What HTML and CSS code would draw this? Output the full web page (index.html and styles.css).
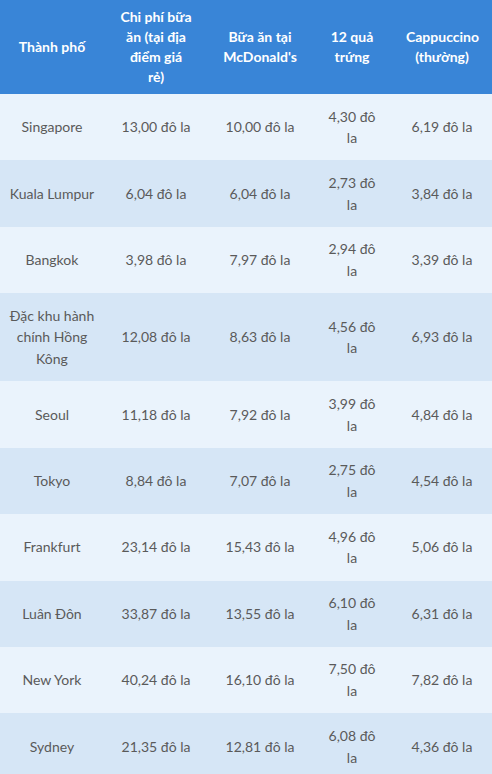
FILE: index.html
```html
<!DOCTYPE html>
<html>
<head>
    <meta charset="utf-8">
    <title>Chi phí sinh hoạt</title>
    <link rel="stylesheet" href="styles.css">
</head>
<body>
    <table class="price-table">
        <colgroup>
            <col class="col-city">
            <col class="col-meal">
            <col class="col-mcd">
            <col class="col-eggs">
            <col class="col-coffee">
        </colgroup>
        <thead>
            <tr>
                <th>Thành phố</th>
                <th>Chi phí bữa ăn (tại địa điểm giá<br>rẻ)</th>
                <th>Bữa ăn tại McDonald's</th>
                <th>12 quả trứng</th>
                <th>Cappuccino (thường)</th>
            </tr>
        </thead>
        <tbody>
            <tr><td>Singapore</td><td>13,00 đô la</td><td>10,00 đô la</td><td>4,30 đô la</td><td>6,19 đô la</td></tr>
            <tr><td>Kuala Lumpur</td><td>6,04 đô la</td><td>6,04 đô la</td><td>2,73 đô la</td><td>3,84 đô la</td></tr>
            <tr><td>Bangkok</td><td>3,98 đô la</td><td>7,97 đô la</td><td>2,94 đô la</td><td>3,39 đô la</td></tr>
            <tr><td>Đặc khu hành chính Hồng Kông</td><td>12,08 đô la</td><td>8,63 đô la</td><td>4,56 đô la</td><td>6,93 đô la</td></tr>
            <tr><td>Seoul</td><td>11,18 đô la</td><td>7,92 đô la</td><td>3,99 đô la</td><td>4,84 đô la</td></tr>
            <tr><td>Tokyo</td><td>8,84 đô la</td><td>7,07 đô la</td><td>2,75 đô la</td><td>4,54 đô la</td></tr>
            <tr><td>Frankfurt</td><td>23,14 đô la</td><td>15,43 đô la</td><td>4,96 đô la</td><td>5,06 đô la</td></tr>
            <tr><td>Luân Đôn</td><td>33,87 đô la</td><td>13,55 đô la</td><td>6,10 đô la</td><td>6,31 đô la</td></tr>
            <tr><td>New York</td><td>40,24 đô la</td><td>16,10 đô la</td><td>7,50 đô la</td><td>7,82 đô la</td></tr>
            <tr><td>Sydney</td><td>21,35 đô la</td><td>12,81 đô la</td><td>6,08 đô la</td><td>4,36 đô la</td></tr>
        </tbody>
    </table>
</body>
</html>
```
FILE: styles.css
```css
body {
    font-family: 'Lato', 'Noto Sans', sans-serif;
    margin: 0;
    background-color: #fff;
}
.price-table {
    width: 100%;
    table-layout: fixed;
    border-collapse: collapse;
    font-size: 14px;
}
.col-city { width: 104px; }
.col-meal { width: 104px; }
.col-mcd { width: 104px; }
.col-eggs { width: 80px; }
.col-coffee { width: 100px; }
.price-table th {
    background-color: #3985d7;
    color: #fff;
    font-weight: bold;
    line-height: 20px;
    padding: 7px 14px;
    text-align: center;
}
.price-table td {
    color: #5a5a5a;
    line-height: 21.7px;
    padding: 11.5px 8px;
    text-align: center;
}
.price-table th:nth-child(4),
.price-table td:nth-child(4) {
    padding-left: 12px;
    padding-right: 12px;
}
.price-table tbody tr:nth-child(odd) {
    background-color: #eaf3fc;
}
.price-table tbody tr:nth-child(even) {
    background-color: #d6e6f6;
}
```
